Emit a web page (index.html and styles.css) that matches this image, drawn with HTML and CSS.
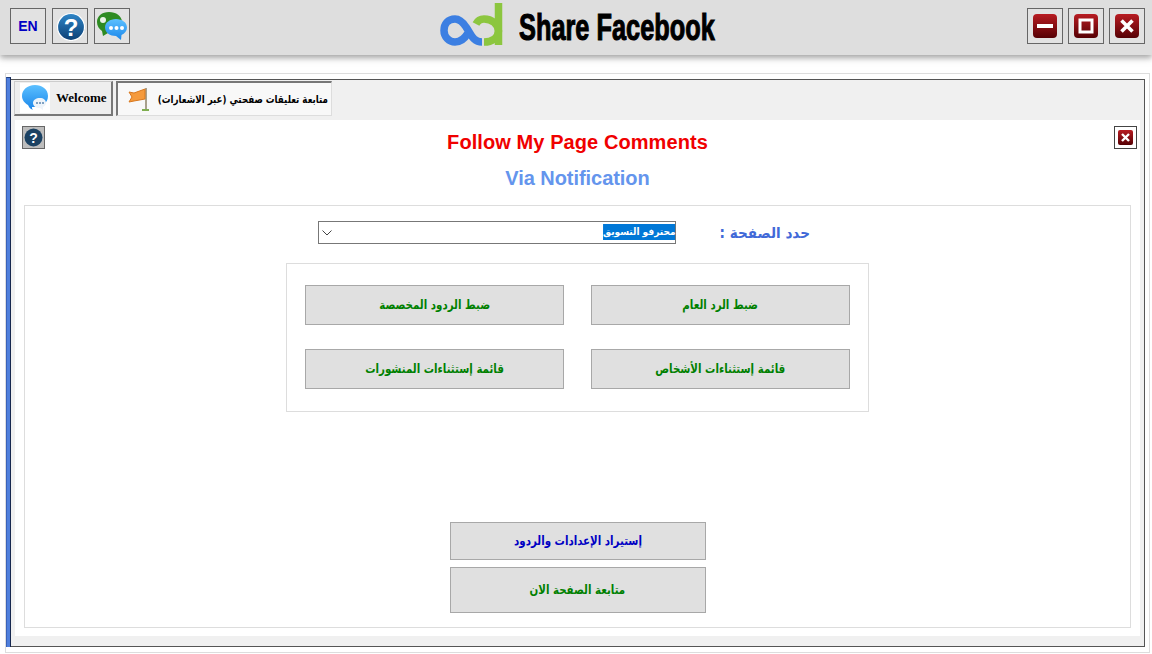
FILE: index.html
```html
<!DOCTYPE html>
<html lang="ar">
<head>
<meta charset="utf-8">
<title>Share Facebook</title>
<link rel="stylesheet" href="styles.css">
</head>
<body>
<svg class="defs" width="0" height="0" aria-hidden="true">
  <defs>
    <linearGradient id="red" x1="0" y1="0" x2="0" y2="1"><stop offset="0" stop-color="#b81c22"/><stop offset="1" stop-color="#560004"/></linearGradient>
    <linearGradient id="blue" x1="0" y1="0" x2="0" y2="1"><stop offset="0" stop-color="#2f86c8"/><stop offset="1" stop-color="#0c3f74"/></linearGradient>
    <linearGradient id="sky" x1="0" y1="0" x2="0" y2="1"><stop offset="0" stop-color="#5cc0ff"/><stop offset="1" stop-color="#1a86ea"/></linearGradient>
  </defs>
</svg>
<header class="topbar">
  <div class="tools">
    <button class="tool en">EN</button>
    <button class="tool">
      <svg width="30" height="30" viewBox="0 0 30 30"><circle cx="16" cy="16" r="13.500" fill="url(#blue)" stroke="#fff" stroke-width="1.200"/><text x="16" y="24.500" class="q">?</text></svg>
    </button>
    <button class="tool">
      <svg width="32" height="32" viewBox="0 0 32 32"><path d="M13 2C6 2 1 6 1 12c0 4 2 7 5 9l1 5 5-3h2c7 0 12-5 12-11S20 2 13 2z" fill="#2e8b22"/><circle cx="7" cy="10" r="3" fill="#e9f3e6"/><path d="M20 9c-6 0-11 3.500-11 8.500 0 5 5 8.500 11 8.500l5 4 .5-5c3-1.500 5.500-4 5.500-7.500C31 12.500 26 9 20 9z" fill="url(#sky)"/><circle cx="15" cy="18" r="2" fill="#fff"/><circle cx="20.500" cy="18" r="2" fill="#fff"/><circle cx="26" cy="18" r="2" fill="#fff"/></svg>
    </button>
  </div>
  <div class="brand">
    <svg class="logo" width="66" height="50" viewBox="0 0 66 50"><path d="M36 24C38 20 41 19 44 19 52 19 58 24 58.500 31 58 38 52 42 44 42" fill="none" stroke="#8cc63f" stroke-width="7.500"/><path d="M58.500 3V45" fill="none" stroke="#8cc63f" stroke-width="7.500"/><path d="M42 42C33 42 31 34 26 27 22 21 18 19 15 19 8 19 4 24 4 30.500 4 37 9 42 15 42 21 42 25 38 28 33" fill="none" stroke="#3c7fe2" stroke-width="7.500"/></svg>
    <span class="brand-name">Share Facebook</span>
  </div>
  <div class="tools wintools">
    <button class="tool">
      <svg width="24" height="24" viewBox="0 0 24 24"><rect width="24" height="24" rx="4" fill="url(#red)"/><rect x="4" y="10" width="16" height="4" fill="#fff"/></svg>
    </button>
    <button class="tool">
      <svg width="24" height="24" viewBox="0 0 24 24"><rect width="24" height="24" rx="4" fill="url(#red)"/><rect x="6" y="6" width="12" height="12" fill="none" stroke="#fff" stroke-width="3"/></svg>
    </button>
    <button class="tool">
      <svg width="24" height="24" viewBox="0 0 24 24"><rect width="24" height="24" rx="4" fill="url(#red)"/><path d="M6.500 6.500l11 11M17.500 6.500l-11 11" stroke="#fff" stroke-width="3.600"/></svg>
    </button>
  </div>
</header>

<main class="window">
  <div class="bar"></div>
  <div class="frame">
    <nav class="tabs">
      <div class="tab tab-welcome">
        <span class="tab-pic">
          <svg width="28" height="28" viewBox="0 0 28 28"><path d="M14 1C6 1 1 6 1 12c0 4 2.500 7 6 9 1 2 2 4 5 5-1-1-1-2-1-3h3c7 0 13-4 13-11S21 1 14 1z" fill="url(#sky)"/><path d="M19 14c-4 0-7 2-7 5s3 5 7 5l3 2v-3c2-1 3-2.500 3-4 0-3-2.500-5-6-5z" fill="#eef4fa"/><circle cx="16" cy="19" r="1" fill="#5b87b0"/><circle cx="19" cy="19" r="1" fill="#5b87b0"/><circle cx="22" cy="19" r="1" fill="#5b87b0"/></svg>
        </span>
        <span class="tab-en">Welcome</span>
      </div>
      <div class="tab tab-active">
        <svg class="flag" width="22" height="24" viewBox="0 0 22 24"><path d="M18 1v21" stroke="#a8a08c" stroke-width="2"/><path d="M14 23h7" stroke="#7fae50" stroke-width="2"/><path d="M17 2L6 6 1 5l3 5-3 5 5-1 11-2z" fill="#f59a3c" stroke="#d9781e" stroke-width="1"/></svg>
        <span class="tab-ar" dir="rtl">متابعة تعليقات صفحتي (عبر الاشعارات)</span>
      </div>
    </nav>
    <section class="panel">
      <button class="mini mini-help">
        <svg width="19" height="19" viewBox="0 0 19 19"><circle cx="9.500" cy="9.500" r="9" fill="#1c4263"/><text x="9.500" y="14.500" class="q q-small">?</text></svg>
      </button>
      <button class="mini mini-close">
        <svg width="15" height="15" viewBox="0 0 15 15"><rect width="15" height="15" rx="2" fill="url(#red)"/><path d="M4 4l7 7M11 4l-7 7" stroke="#fff" stroke-width="2.400"/></svg>
      </button>
      <h1 class="title">Follow My Page Comments</h1>
      <h2 class="subtitle">Via Notification</h2>
      <div class="box">
        <div class="select-row">
          <div class="select" dir="rtl">
            <span class="selected">محترفو التسويق</span>
            <svg class="chev" width="10" height="6" viewBox="0 0 10 6"><path d="M.5.5L5 5 9.500.5" fill="none" stroke="#444"/></svg>
          </div>
          <label class="select-label" dir="rtl">حدد الصفحة :</label>
        </div>
        <div class="actions" dir="rtl">
          <button class="btn"><span class="btn-text">ضبط الرد العام</span></button>
          <button class="btn"><span class="btn-text">ضبط الردود المخصصة</span></button>
          <button class="btn"><span class="btn-text">قائمة إستثناءات الأشخاص</span></button>
          <button class="btn"><span class="btn-text">قائمة إستثناءات المنشورات</span></button>
        </div>
        <div class="footer-actions" dir="rtl">
          <button class="btn btn-wide btn-import"><span class="btn-text">إستيراد الإعدادات والردود</span></button>
          <button class="btn btn-wide btn-follow"><span class="btn-text">متابعة الصفحة الان</span></button>
        </div>
      </div>
    </section>
  </div>
</main>
</body>
</html>
```
FILE: styles.css
```css
* { box-sizing: border-box; }
html, body { margin: 0; padding: 0; }
body {
  width: 1152px;
  height: 654px;
  overflow: hidden;
  background: #fff;
  font-family: "Liberation Sans", "DejaVu Sans", sans-serif;
}
button { font-family: inherit; padding: 0; margin: 0; cursor: default; }
.defs { position: absolute; }

.topbar {
  height: 55px;
  background: #dedede;
  box-shadow: 0 3px 6px rgba(90, 90, 90, .55);
  padding: 8px 7px 0 10px;
  display: flex;
  justify-content: space-between;
  align-items: flex-start;
  position: relative;
}
.tools { display: flex; gap: 6px; }
.wintools { gap: 5px; }
.tool {
  width: 36px;
  height: 36px;
  border: 1px solid #666;
  background: #e2e2e2;
  display: flex;
  align-items: center;
  justify-content: center;
}
.en { color: #0000c4; font-weight: 700; font-size: 14px; }
.q { font: 700 24px "Liberation Sans", sans-serif; fill: #fff; text-anchor: middle; }
.q-small { font-size: 14px; }

.brand {
  width: 277px;
  height: 50px;
  margin-top: -8px;
  display: flex;
  align-items: center;
  gap: 13px;
}
.logo { flex: none; }
.brand-name {
  font-family: "Liberation Sans", sans-serif;
  font-weight: 700;
  font-size: 37px;
  color: #000;
  white-space: nowrap;
  -webkit-text-stroke: 1.100px #000;
  margin-top: 6px;
  transform: scaleX(.685);
  transform-origin: left center;
}

.window {
  width: 1145px;
  height: 580px;
  margin: 18px 0 0 5px;
  border: 1px solid #ddd;
  padding-top: 3px;
  display: flex;
  align-items: flex-start;
}
.bar {
  width: 5px;
  height: 570px;
  background: #4f7fdc;
  border-top: 1px solid #23407f;
  border-left: 1px solid #3a62b8;
  border-right: 1px solid #17284f;
}
.frame {
  width: 1134px;
  height: 568px;
  margin-top: 2px;
  border: 1px solid #555;
  border-left: 0;
  background: #f0f0f0;
  padding: 0 4px 10px 4px;
  display: flex;
  flex-direction: column;
}
.tabs {
  height: 40px;
  flex: none;
  padding-top: 1px;
  display: flex;
  align-items: flex-start;
  gap: 3px;
  margin-left: -1px;
}
.tab {
  height: 35px;
  display: flex;
  align-items: center;
}
.tab-welcome {
  width: 99px;
  background: #eee;
  border-right: 2px solid #777;
  border-bottom: 2px solid #777;
  border-top: 1px solid #ccc;
  border-left: 1px solid #ccc;
  padding-left: 5px;
  gap: 6px;
}
.tab-pic {
  width: 30px;
  height: 30px;
  background: #fff;
  display: flex;
  align-items: center;
  justify-content: center;
  flex: none;
}
.tab-en {
  font: 700 13px "Liberation Serif", serif;
  color: #000;
}
.tab-active {
  width: 216px;
  background: #f8f8f8;
  border-top: 2px solid #777;
  border-left: 2px solid #777;
  border-right: 1px solid #ddd;
  border-bottom: 1px solid #ddd;
  padding: 0 3px 0 10px;
  justify-content: space-between;
}
.flag { flex: none; }
.tab-ar {
  width: 169px;
  font: 700 11px "DejaVu Sans", sans-serif;
  color: #000;
  white-space: nowrap;
  transform: scaleX(.79);
  transform-origin: right center;
}

.panel {
  flex: 1;
  background: #fff;
  position: relative;
  padding: 10px 9px 8px;
  display: flex;
  flex-direction: column;
  min-height: 0;
}
.mini {
  position: absolute;
  top: 6px;
  width: 23px;
  height: 23px;
  display: flex;
  align-items: center;
  justify-content: center;
}
.mini-help { left: 7px; background: #bdbdbd; border: 1px solid #666; }
.mini-close { right: 3px; background: #fff; border: 1px solid #444; }

.title, .subtitle {
  margin: 0;
  text-align: center;
  font-size: 20px;
  font-weight: 700;
  line-height: 24px;
}
.title { color: #f00000; letter-spacing: .08px; }
.subtitle { color: #6495ed; margin-top: 12px; letter-spacing: -.05px; }

.box {
  margin-top: 15px;
  flex: 1;
  border: 1px solid #ddd;
  padding: 15px 0 14px;
  display: flex;
  flex-direction: column;
  align-items: center;
  min-height: 0;
}
.select-row {
  width: 583px;
  padding-left: 32px;
  display: flex;
  align-items: flex-start;
}
.select {
  width: 358px;
  height: 23px;
  border: 1px solid #777;
  background: #fff;
  position: relative;
  display: flex;
  align-items: flex-start;
  padding-top: 2px;
}
.selected {
  background: #0078d7;
  color: #fff;
  font: 700 10px/15px "DejaVu Sans", sans-serif;
  height: 16px;
  white-space: nowrap;
  transform: scaleX(.9);
  transform-origin: right center;
}
.chev { position: absolute; left: 3px; top: 8px; }
.select-label {
  margin: 2px 0 0 44px;
  width: 90px;
  color: #4169d8;
  font: 700 15px/20px "DejaVu Sans", sans-serif;
  white-space: nowrap;
  transform: scaleX(.905);
  transform-origin: right center;
}
.actions {
  margin-top: 19px;
  width: 583px;
  height: 149px;
  border: 1px solid #ddd;
  padding: 21px 18px 22px;
  display: grid;
  grid-template-columns: 259px 259px;
  grid-auto-rows: 40px;
  gap: 24px 27px;
}
.btn {
  background: #e0e0e0;
  border: 1px solid #a8a8a8;
  color: #008000;
  font: 700 12.500px "DejaVu Sans", sans-serif;
  white-space: nowrap;
  padding-bottom: 2px;
}
.btn-text {
  display: inline-block;
  transform: scaleX(.82);
}
.footer-actions {
  margin-top: auto;
  display: flex;
  flex-direction: column;
  gap: 7px;
}
.btn-wide { width: 256px; }
.btn-import { height: 38px; color: #0000c4; }
.btn-follow { height: 46px; }
```
